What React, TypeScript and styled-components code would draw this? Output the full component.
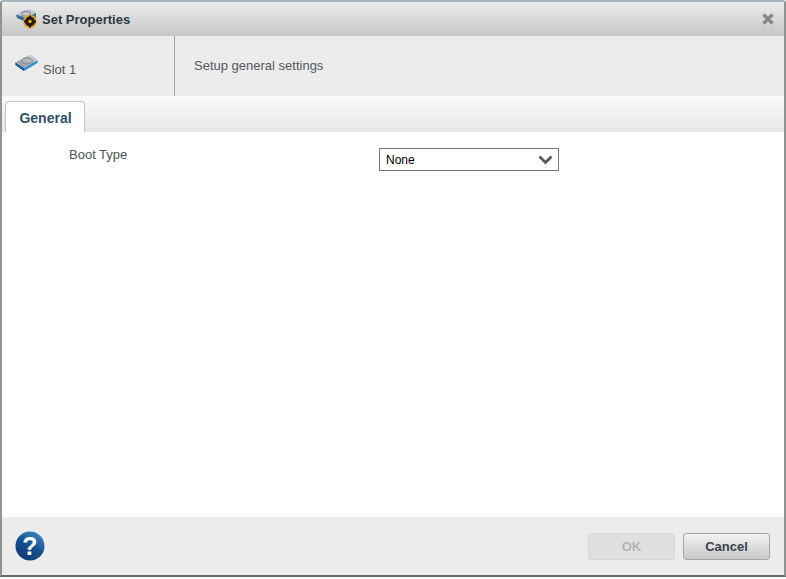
import styled, { createGlobalStyle } from "styled-components";

const Global = createGlobalStyle`
  html, body {
    margin: 0;
    padding: 0;
    background: #ffffff;
  }
  body {
    font-family: "Liberation Sans", Arial, sans-serif;
  }
`;

const Dialog = styled.div`
  width: 786px;
  height: 577px;
  box-sizing: border-box;
  display: flex;
  flex-direction: column;
  border-top: 2px solid #a9b4bc;
  border-left: 2px solid #8f9493;
  border-right: 2px solid #8f9493;
  border-bottom: 2px solid #5f6a6c;
  border-radius: 3px 3px 0 0;
  background: #ffffff;
`;

const TitleBar = styled.div`
  height: 34px;
  flex: none;
  display: flex;
  align-items: center;
  padding: 0 10px 0 14px;
  background: linear-gradient(#ececec, #c6c6c6);
`;

const TitleText = styled.div`
  flex: 1;
  margin-left: 4px;
  font-size: 13px;
  font-weight: bold;
  color: #2c3a46;
`;

const Header = styled.div`
  height: 60px;
  flex: none;
  display: flex;
  background: #ececec;
`;

const SlotCell = styled.div`
  width: 173px;
  box-sizing: border-box;
  display: flex;
  align-items: flex-start;
  padding: 17px 0 0 13px;
  border-right: 1px solid #a5a5a5;
`;

const SlotName = styled.span`
  margin: 9px 0 0 5px;
  font-size: 13px;
  color: #55595e;
`;

const HeaderNote = styled.div`
  padding: 22px 0 0 19px;
  font-size: 13px;
  color: #55595e;
`;

const TabStrip = styled.div`
  height: 36px;
  flex: none;
  box-sizing: border-box;
  display: flex;
  align-items: flex-end;
  padding-left: 3px;
  background: linear-gradient(#fbfbfb, #e6e6e6);
`;

const Tab = styled.div`
  width: 80px;
  height: 31px;
  box-sizing: border-box;
  padding: 8px 0 0 1px;
  text-align: center;
  font-size: 14px;
  font-weight: bold;
  color: #2f5168;
  background: #ffffff;
  border: 1px solid #c4c4c4;
  border-bottom: none;
  border-radius: 4px 4px 0 0;
`;

const Content = styled.div`
  flex: 1;
  display: flex;
  align-items: flex-start;
  background: #ffffff;
`;

const FieldLabel = styled.label`
  width: 377px;
  box-sizing: border-box;
  padding: 15px 0 0 67px;
  font-size: 13px;
  color: #4c5258;
`;

const SelectBox = styled.div`
  width: 180px;
  height: 23px;
  margin-top: 16px;
  box-sizing: border-box;
  display: flex;
  align-items: center;
  justify-content: space-between;
  padding: 0 5px 0 6px;
  border: 1px solid #767676;
  font-size: 12px;
  color: #000000;
`;

const Footer = styled.div`
  height: 58px;
  flex: none;
  box-sizing: border-box;
  display: flex;
  align-items: center;
  padding: 0 14px 0 12px;
  background: #ececec;
`;

const Spacer = styled.div`
  flex: 1;
`;

const Button = styled.button<{ $disabled?: boolean }>`
  width: 87px;
  height: 27px;
  margin: 1px 0 0 8px;
  padding: 0;
  font-family: inherit;
  font-size: 13px;
  font-weight: bold;
  border-radius: 3px;
  border: 1px solid ${(p) => (p.$disabled ? "#d8d8d8" : "#a6a6a6")};
  color: ${(p) => (p.$disabled ? "#b4b4b4" : "#3a4250")};
  background: ${(p) => (p.$disabled ? "#e0e0e0" : "linear-gradient(#f2f2f2, #c9c9c9)")};
`;

const DiskGear = () => (
  <svg width="22" height="20" viewBox="0 0 22 20">
    <path d="M0 6 L9 1.5 Q12 0 15 1.5 L20 4 L20 9 L10 13 L1 9 Z" fill="#3f6f97" />
    <path d="M0 5.5 L9 1.5 Q12 0.5 15 1.5 L20 4 L10 8.5 Z" fill="#c6ccd1" />
    <ellipse cx="10" cy="4.8" rx="4.6" ry="2.2" fill="none" stroke="#8b949b" strokeWidth="1.2" />
    <circle cx="14" cy="12.5" r="6.8" fill="#f0a41e" />
    <circle cx="14" cy="12.5" r="5" fill="#1c1c1c" />
    <path d="M14 6.5 V9 M14 16 V18.5 M8 12.5 H10.5 M17.5 12.5 H20" stroke="#1c1c1c" strokeWidth="2" />
    <circle cx="14" cy="12.5" r="1.8" fill="#f0a41e" />
  </svg>
);

const Disk = () => (
  <svg width="23" height="19" viewBox="0 0 23 19">
    <defs>
      <linearGradient id="diskTop" x1="0" y1="1" x2="1" y2="0">
        <stop offset="0" stopColor="#8f969c" />
        <stop offset="0.6" stopColor="#b4babf" />
        <stop offset="1" stopColor="#d9dcde" />
      </linearGradient>
    </defs>
    <path d="M0.5 9.5 L9 15 L22.5 7 L22.5 10 L9 18 L0.5 12 Z" fill="#2f8fd0" />
    <path d="M0.5 9.5 L9 15 L9 18 L0.5 12 Z" fill="#1c5c92" />
    <path d="M0.5 9.5 L13 2.5 Q15 1.5 17 2.5 L22.5 7 L9 15 Z" fill="url(#diskTop)" />
    <ellipse cx="12" cy="8" rx="5.5" ry="3" fill="none" stroke="#7e868c" strokeWidth="1" />
  </svg>
);

const CloseIcon = () => (
  <svg width="12" height="12" viewBox="0 0 12 12">
    <path d="M1.5 1.5 L10.5 10.5 M10.5 1.5 L1.5 10.5" stroke="#8a8a8a" strokeWidth="3.4" fill="none" />
  </svg>
);

const Chevron = () => (
  <svg width="15" height="10" viewBox="0 0 15 10">
    <path d="M1.5 1.5 L7.5 7.5 L13.5 1.5" stroke="#5a5a5a" strokeWidth="2.8" fill="none" />
  </svg>
);

const HelpIcon = () => (
  <svg width="31" height="30" viewBox="0 0 31 30">
    <defs>
      <linearGradient id="helpFill" x1="0.8" y1="0" x2="0.2" y2="1">
        <stop offset="0" stopColor="#3f8ac6" />
        <stop offset="0.5" stopColor="#134f8e" />
        <stop offset="1" stopColor="#123a73" />
      </linearGradient>
    </defs>
    <circle cx="16" cy="15" r="14.5" fill="url(#helpFill)" />
    <text
      x="16"
      y="24"
      textAnchor="middle"
      fontFamily="Liberation Sans, Arial, sans-serif"
      fontSize="25"
      fontWeight="bold"
      fill="#ffffff"
    >
      ?
    </text>
  </svg>
);

export default function App() {
  return (
    <>
      <Global />
      <Dialog>
        <TitleBar>
          <DiskGear />
          <TitleText>Set Properties</TitleText>
          <CloseIcon />
        </TitleBar>
        <Header>
          <SlotCell>
            <Disk />
            <SlotName>Slot 1</SlotName>
          </SlotCell>
          <HeaderNote>Setup general settings</HeaderNote>
        </Header>
        <TabStrip>
          <Tab>General</Tab>
        </TabStrip>
        <Content>
          <FieldLabel>Boot Type</FieldLabel>
          <SelectBox>
            None
            <Chevron />
          </SelectBox>
        </Content>
        <Footer>
          <HelpIcon />
          <Spacer />
          <Button $disabled disabled>
            OK
          </Button>
          <Button>Cancel</Button>
        </Footer>
      </Dialog>
    </>
  );
}
